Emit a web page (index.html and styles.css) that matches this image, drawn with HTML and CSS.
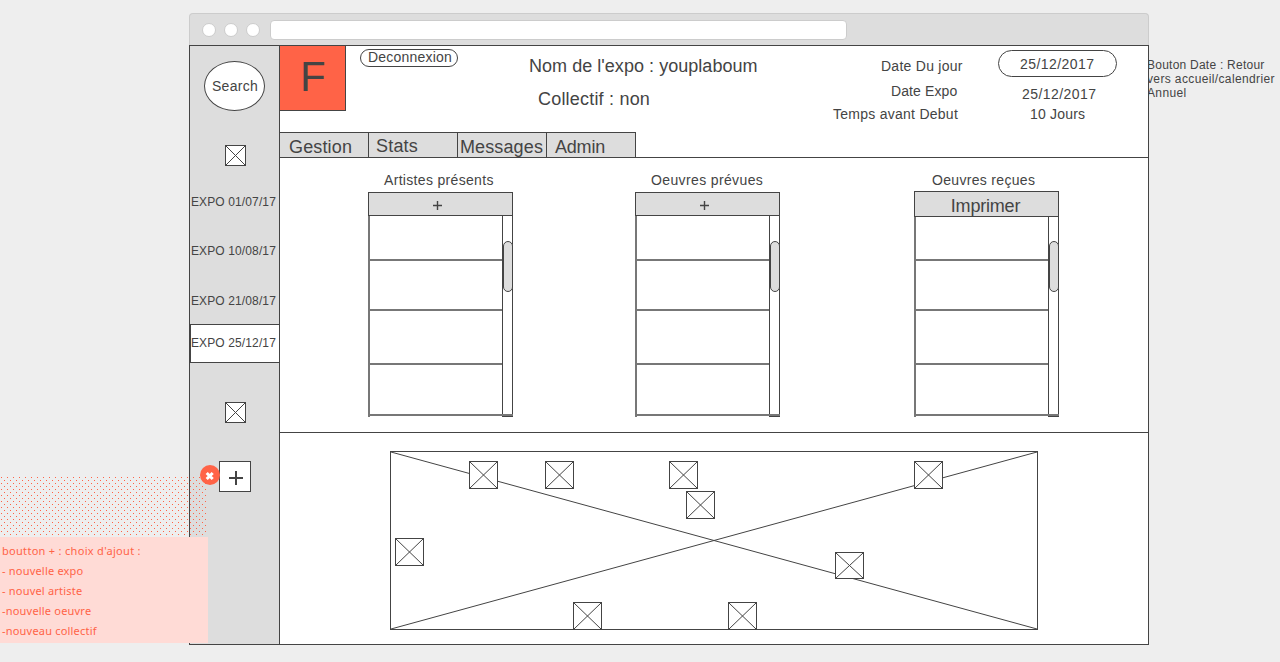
FILE: index.html
```html
<!DOCTYPE html>
<html lang="fr">
<head>
<meta charset="utf-8">
<title>Expo youplaboum</title>
<link rel="stylesheet" href="styles.css">
</head>
<body>
<svg class="defs" width="0" height="0">
  <symbol id="cross" viewBox="0 0 100 100" preserveAspectRatio="none">
    <path d="M0 0L100 100M100 0L0 100" stroke="#444" stroke-width="1" vector-effect="non-scaling-stroke"/>
  </symbol>
</svg>
<div class="stage">
  <div class="window">
    <div class="chrome">
      <i class="dot"></i><i class="dot"></i><i class="dot"></i>
      <div class="url"></div>
    </div>
    <div class="frame">
      <nav class="sidebar">
        <div class="search"><span>Search</span></div>
        <svg class="thumb"><use href="#cross"/></svg>
        <div class="expos">
          <a class="expo">EXPO 01/07/17</a>
          <a class="expo">EXPO 10/08/17</a>
          <a class="expo">EXPO 21/08/17</a>
          <a class="expo current">EXPO 25/12/17</a>
        </div>
        <svg class="thumb low"><use href="#cross"/></svg>
        <div class="add">
          <svg width="14" height="14"><path d="M0 7H14M7 0V14" stroke="#444" stroke-width="2"/></svg>
        </div>
      </nav>
      <main class="main">
        <header class="top">
          <div class="banner">
            <div class="logo">F</div>
            <div class="logout">Deconnexion</div>
            <div class="title">
              <div>Nom de l'expo : youplaboum</div>
              <div class="collective">Collectif : non</div>
            </div>
            <div class="labels">
              <div class="l1">Date Du jour</div>
              <div class="l2">Date Expo</div>
              <div class="l3">Temps avant Debut</div>
            </div>
            <div class="values">
              <div class="pill">25/12/2017</div>
              <div class="v2">25/12/2017</div>
              <div class="v3">10 Jours</div>
            </div>
          </div>
          <div class="tabs">
            <div class="tab gestion">Gestion</div>
            <div class="tab stats">Stats</div>
            <div class="tab messages">Messages</div>
            <div class="tab admin">Admin</div>
          </div>
        </header>
        <section class="lists">
          <div class="list artists">
            <div class="caption">Artistes présents</div>
            <div class="head"><svg width="9" height="9"><path d="M0 4.5H9M4.5 0V9" stroke="#444" stroke-width="1.4"/></svg></div>
            <div class="body">
              <div class="rows"><div></div><div></div><div></div><div></div></div>
              <div class="scroll"><div class="grip"></div></div>
            </div>
          </div>
          <div class="list planned">
            <div class="caption">Oeuvres prévues</div>
            <div class="head"><svg width="9" height="9"><path d="M0 4.5H9M4.5 0V9" stroke="#444" stroke-width="1.4"/></svg></div>
            <div class="body">
              <div class="rows"><div></div><div></div><div></div><div></div></div>
              <div class="scroll"><div class="grip"></div></div>
            </div>
          </div>
          <div class="list received">
            <div class="caption">Oeuvres reçues</div>
            <div class="head">Imprimer</div>
            <div class="body">
              <div class="rows"><div></div><div></div><div></div><div></div></div>
              <div class="scroll"><div class="grip"></div></div>
            </div>
          </div>
        </section>
        <section class="plan">
          <div class="map">
            <svg class="lines"><use href="#cross"/></svg>
            <svg class="pin" style="left:78px;top:9px"><use href="#cross"/></svg>
            <svg class="pin" style="left:154px;top:9px"><use href="#cross"/></svg>
            <svg class="pin" style="left:278px;top:9px"><use href="#cross"/></svg>
            <svg class="pin" style="left:295px;top:39px"><use href="#cross"/></svg>
            <svg class="pin" style="left:523px;top:9px"><use href="#cross"/></svg>
            <svg class="pin" style="left:4px;top:86px"><use href="#cross"/></svg>
            <svg class="pin short" style="left:444px;top:100px"><use href="#cross"/></svg>
            <svg class="pin" style="left:182px;top:150px"><use href="#cross"/></svg>
            <svg class="pin" style="left:337px;top:150px"><use href="#cross"/></svg>
          </div>
        </section>
      </main>
    </div>
  </div>
  <aside class="side-note">Bouton Date : Retour<br>vers accueil/calendrier<br>Annuel</aside>
</div>
<svg class="dots" width="208" height="60">
  <defs><pattern id="dotgrid" width="6" height="6" patternUnits="userSpaceOnUse">
    <rect x="1" y="0" width="1" height="1" fill="#ff6347"/><rect x="4" y="3" width="1" height="1" fill="#ff6347"/>
  </pattern></defs>
  <rect width="208" height="60" fill="url(#dotgrid)"/>
</svg>
<div class="note">
  <div class="first">boutton + : choix d'ajout :</div>
  <div>- nouvelle expo</div>
  <div>- nouvel artiste</div>
  <div>-nouvelle oeuvre</div>
  <div>-nouveau collectif</div>
</div>
<svg class="close" width="20" height="20"><circle cx="10" cy="10" r="10" fill="#ff6347"/><path d="M6.7 8L12.7 14M12.7 8L6.7 14" stroke="#fff" stroke-width="3"/></svg>
</body>
</html>
```
FILE: styles.css
```css
* { box-sizing: border-box; }
body {
  margin: 0;
  width: 1280px;
  height: 662px;
  overflow: hidden;
  position: relative;
  background: #eee;
  color: #444;
  font: 14px/16px "Liberation Sans", Arial, sans-serif;
}
svg { display: block; }
.defs { position: absolute; }
.stage { display: flex; padding: 13px 0 0 189px; }

.window { width: 960px; flex: none; position: relative; z-index: 1; }
.chrome {
  height: 32px;
  display: flex;
  align-items: center;
  gap: 8px;
  padding: 1px 0 0 12px;
  background: #ddd;
  border: 1px solid #ccc;
  border-bottom: 0;
  border-radius: 4px 4px 0 0;
}
.dot { width: 14px; height: 14px; border-radius: 50%; background: #fff; border: 1px solid #ccc; }
.url { width: 577px; height: 20px; margin-left: 2px; background: #fff; border: 1px solid #ccc; border-radius: 4px; }
.frame { display: flex; height: 600px; border: 1px solid #444; background: #fff; }

.sidebar {
  width: 90px;
  display: flex;
  flex-direction: column;
  align-items: center;
  background: #ddd;
  border-right: 1px solid #444;
}
.search {
  width: 61px;
  height: 50px;
  margin-top: 15px;
  padding-left: 1px;
  display: flex;
  align-items: center;
  justify-content: center;
  white-space: nowrap;
  letter-spacing: .3px;
  border: 1px solid #444;
  border-radius: 50%;
  background: #fff;
}
.thumb { width: 21px; height: 21px; margin-top: 34px; margin-left: 2px; border: 1px solid #444; background: #fff; }
.thumb.low { margin-top: 39px; }
.expos { width: 100%; padding-top: 12px; font-size: 12px; letter-spacing: .12px; }
.expo { display: block; height: 49px; line-height: 49px; padding-left: 1px; white-space: nowrap; }
.expo + .expo + .expo { height: 48px; line-height: 50px; }
.expo.current { height: 39px !important; line-height: 37px !important; padding-left: 0; border: solid #444; border-width: 1px 0 1px 1px; background: #fff; }
.add {
  width: 32px;
  height: 31px;
  margin-top: 38px;
  display: flex;
  align-items: center;
  justify-content: center;
  padding: 3px 0 0 2px;
  border: 1px solid #444;
  background: #fff;
}

.main { flex: 1; min-width: 0; }
.top { height: 112px; border-bottom: 1px solid #444; display: flex; flex-direction: column; }
.banner { height: 86px; display: flex; align-items: flex-start; white-space: nowrap; }
.logo {
  width: 66px;
  height: 65px;
  padding-left: 20px;
  font-size: 42px;
  line-height: 61px;
  background: #ff6347;
  border: solid #444;
  border-width: 0 1px 1px 0;
}
.logout {
  width: 98px;
  height: 18px;
  margin: 3px 0 0 14px;
  padding-left: 7px;
  line-height: 15px;
  letter-spacing: .2px;
  border: 1px solid #444;
  border-radius: 9px;
}
.title { width: 304px; padding: 10px 0 0 71px; font-size: 18px; line-height: 20px; letter-spacing: .04px; }
.collective { margin: 13px 0 0 9px; letter-spacing: .2px; }
.labels { width: 200px; padding: 12px 0 0 71px; letter-spacing: .26px; }
.l1 { margin-left: 48px; }
.l2 { margin: 9px 0 0 58px; letter-spacing: .1px; }
.l3 { margin-top: 7px; }
.values { padding: 4px 0 0 36px; letter-spacing: .45px; }
.pill { width: 119px; height: 27px; padding-left: 21px; line-height: 26px; border: 1px solid #444; border-radius: 13.5px; }
.v2 { margin: 9px 0 0 24px; }
.v3 { margin: 4px 0 0 32px; letter-spacing: .2px; }
.tabs { display: flex; height: 25px; border-top: 1px solid #444; width: 356px; background: #ddd; font-size: 18px; line-height: 28px; }
.tab { width: 89px; border-right: 1px solid #444; }
.gestion { padding-left: 9px; letter-spacing: .15px; }
.stats { padding-left: 7px; line-height: 26px; letter-spacing: .2px; }
.messages { padding-left: 2px; letter-spacing: .12px; }
.admin { padding-left: 8px; letter-spacing: -.2px; }

.lists { height: 275px; display: flex; border-bottom: 1px solid #444; padding-top: 14px; }
.list { width: 145px; }
.artists { margin-left: 88px; }
.planned { margin-left: 122px; }
.received { margin-left: 134px; }
.caption { height: 20px; padding-left: 16px; line-height: 17px; white-space: nowrap; letter-spacing: .32px; }
.planned .caption { letter-spacing: .37px; }
.received .caption { height: 19px; padding-left: 18px; }
.head { height: 24px; display: flex; justify-content: center; padding: 8px 6px 0 0; border: 1px solid #444; background: #ddd; font-size: 18px; line-height: 28px; }
.received .head { height: 26px; padding: 0 2px 0 0; letter-spacing: -.2px; }
.body { display: flex; height: 201px; }
.received .body { height: 200px; }
.rows { width: 134px; display: grid; grid-template-rows: 1fr 50px 54px 51px; padding-bottom: 1px; border-left: 2px solid #777; }
.rows div { border-bottom: 2px solid #777; }
.scroll { width: 11px; position: relative; padding-top: 25px; border: solid #444; border-width: 0 1px 1px; }
.received .scroll { padding-top: 24px; }
.scroll::after { content: ""; position: absolute; left: -1px; right: -1px; bottom: 0; height: 2px; background: #777; }
.grip { width: 10px; height: 51px; border: 1px solid #444; border-radius: 5px; background: #ddd; }

.plan { padding: 18px 0 0 110px; }
.map { position: relative; width: 648px; height: 179px; border: 1px solid #444; }
.lines { width: 100%; height: 100%; }
.pin { position: absolute; width: 29px; height: 28px; border: 1px solid #444; background: #fff; }
.pin.short { height: 27px; }

.side-note { margin: 45px 0 0 -2px; font-size: 12px; line-height: 14px; white-space: nowrap; letter-spacing: .37px; }
.side-note::first-line { letter-spacing: .24px; }
.dots { position: absolute; left: 0; top: 477px; z-index: 2; }
.note {
  position: absolute;
  left: 0;
  top: 537px;
  z-index: 2;
  width: 208px;
  height: 106px;
  padding: 4px 0 0 2px;
  background: #ffdbd6;
  color: #ff6347;
  font: 11px/20px "Noto Sans", sans-serif;
  letter-spacing: .2px;
}
.first { letter-spacing: .3px; }
.close { position: absolute; left: 200px; top: 465px; z-index: 3; }
```
